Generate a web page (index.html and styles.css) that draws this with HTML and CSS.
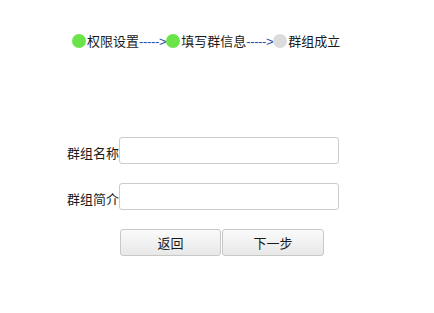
FILE: index.html
```html
<!DOCTYPE html>
<html lang="zh">
<head>
<meta charset="utf-8">
<title>创建群组</title>
<link rel="stylesheet" href="styles.css">
</head>
<body>
<div class="steps">
  <span class="dot dot-done"></span><span class="step-text">权限设置</span><span class="arrow">-----&gt;</span>
  <span class="dot dot-done"></span><span class="step-text">填写群信息</span><span class="arrow">-----&gt;</span>
  <span class="dot dot-todo"></span><span class="step-text">群组成立</span>
</div>
<form class="form">
  <div class="row">
    <label class="label">群组名称</label><input class="field" type="text">
  </div>
  <div class="row">
    <label class="label">群组简介</label><input class="field" type="text">
  </div>
  <div class="buttons">
    <button type="button" class="btn">返回</button><button type="button" class="btn">下一步</button>
  </div>
</form>
</body>
</html>
```

FILE: styles.css
```css
html, body {
  margin: 0;
  padding: 0;
  background: #fff;
}
body {
  font-family: "Noto Sans CJK SC", "Liberation Sans", sans-serif;
  font-size: 13px;
  color: #1a1a1a;
}
.steps {
  display: flex;
  align-items: center;
  height: 14px;
  margin: 34px 0 0 72px;
  white-space: nowrap;
}
.dot {
  width: 14px;
  height: 14px;
  border-radius: 50%;
  flex: none;
}
.dot-done { background: #6be44a; }
.dot-todo { background: #dcdcdc; }
.step-text {
  line-height: 14px;
  margin-left: 1px;
}
.arrow {
  color: #1f4fa8;
  font-family: "Liberation Sans", sans-serif;
  font-size: 13px;
  letter-spacing: -0.35px;
  line-height: 14px;
  padding-top: 1px;
}
.form {
  margin: 89px 0 0 67px;
  display: flex;
  flex-direction: column;
  gap: 19px;
}
.row {
  display: flex;
  align-items: center;
}
.label {
  width: 52px;
  white-space: nowrap;
  padding-top: 4px;
}
.field {
  box-sizing: border-box;
  width: 220px;
  height: 27px;
  margin: 0;
  border: 1px solid #cccccc;
  border-radius: 3px;
  background: #fff;
  padding: 0 4px;
  font: inherit;
}
.buttons {
  display: flex;
  gap: 1px;
  margin-left: 53px;
}
.btn {
  box-sizing: border-box;
  width: 101px;
  height: 27px;
  margin: 0;
  border: 1px solid #c8c8c8;
  border-radius: 3px;
  background: linear-gradient(#fafafa, #e8e8e8);
  font: inherit;
  color: #1a1a1a;
  padding: 0;
}
.btn:last-child { width: 102px; }
```
